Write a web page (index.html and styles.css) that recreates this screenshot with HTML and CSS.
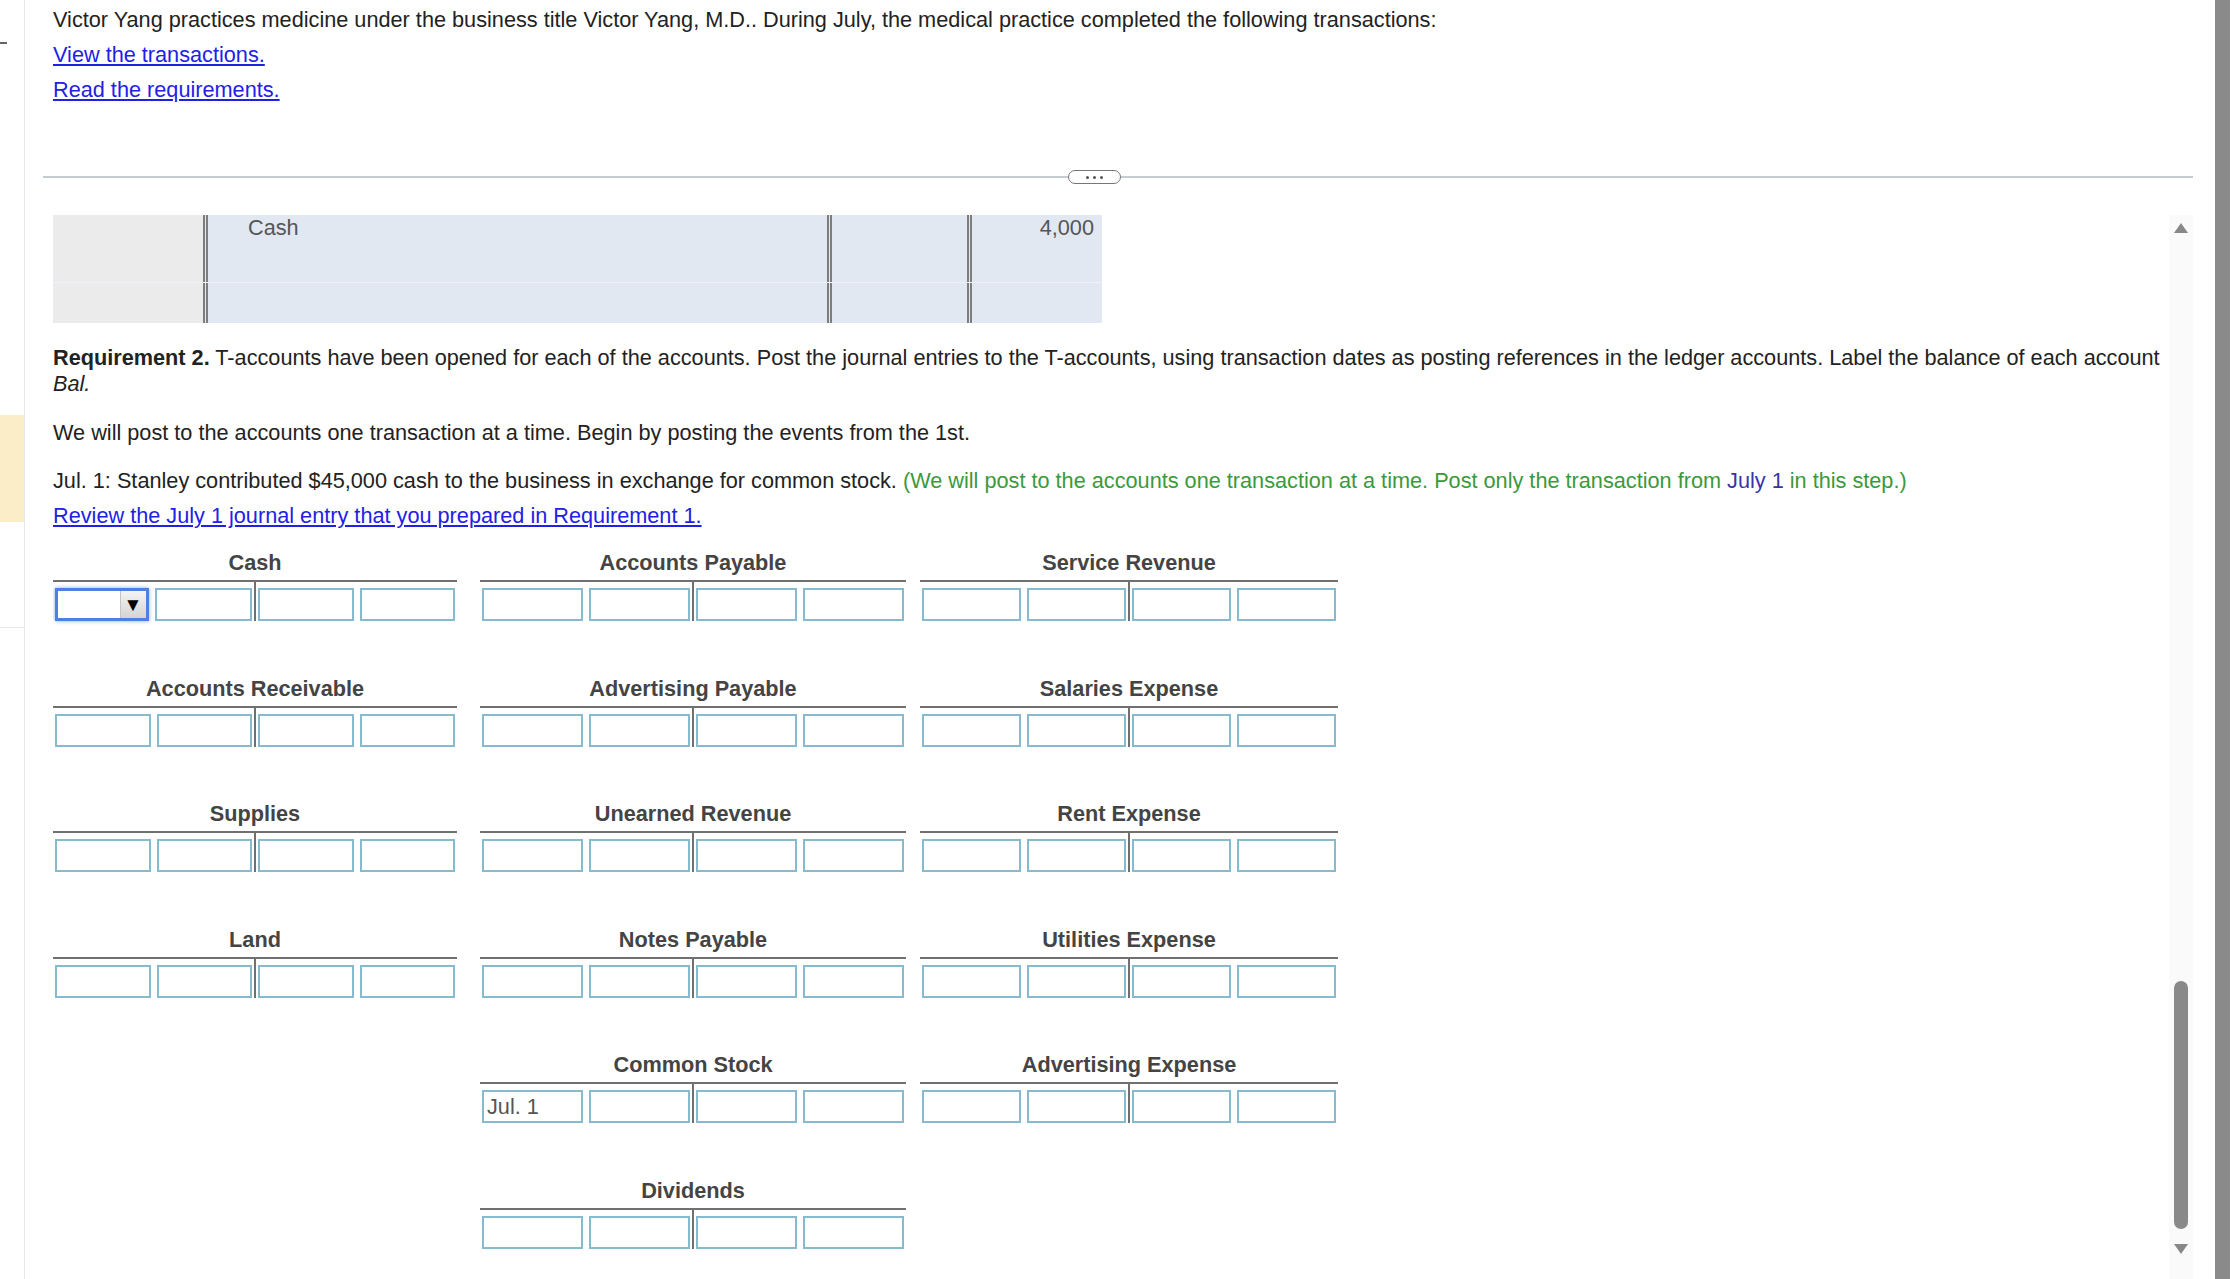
FILE: index.html
```html
<!DOCTYPE html>
<html lang="en">
<head>
    <meta charset="UTF-8">
    <meta name="viewport" content="width=device-width, initial-scale=1">
    <title>Requirement 2 - T-accounts</title>
    <link rel="stylesheet" href="styles.css">
</head>
<body>

<div class="shell">

    <div class="gutter">
        <span class="dash"></span>
        <div class="noteStrip"></div>
        <div class="gutterRule"></div>
    </div>

    <div class="main">

        <div class="intro">
            <p>Victor Yang practices medicine under the business title Victor Yang, M.D.. During July, the medical practice completed the following transactions:</p>
            <p><a href="#">View the transactions.</a></p>
            <p><a href="#">Read the requirements.</a></p>
        </div>

        <div class="divider">
            <span class="dividerLine first"></span>
            <span class="pill"><i></i><i></i><i></i></span>
            <span class="dividerLine"></span>
        </div>

        <div class="pane">
            <div class="paneContent">

                <!-- journal table, scrolled so only the bottom shows -->
                <div class="ledger">
                    <div class="ledgerRow tall">
                        <div class="cellGray"></div>
                        <div class="cellAcct"><span class="cellText">Cash</span></div>
                        <div class="cellRef"></div>
                        <div class="cellAmt"><span class="cellText">4,000</span></div>
                    </div>
                    <div class="ledgerRow short">
                        <div class="cellGray"></div>
                        <div class="cellAcct"></div>
                        <div class="cellRef"></div>
                        <div class="cellAmt"></div>
                    </div>
                </div>

                <p class="req"><b>Requirement 2.</b> T-accounts have been opened for each of the accounts. Post the journal entries to the T-accounts, using transaction dates as posting references in the ledger accounts. Label the balance of each account <i>Bal.</i></p>

                <p class="step">We will post to the accounts one transaction at a time. Begin by posting the events from the 1st.</p>

                <p class="txn">Jul. 1: Stanley contributed $45,000 cash to the business in exchange for common stock. <span class="hint">(We will post to the accounts one transaction at a time. Post only the transaction from <span class="hintDate">July 1</span> in this step.)</span></p>
                <p class="review"><a href="#">Review the July 1 journal entry that you prepared in Requirement 1.</a></p>

                <div class="tGrid">

                    <div class="tAccount colA">
                        <div class="tTitle">Cash</div>
                        <div class="tBody">
                            <div class="half">
                                <div class="pick"><span class="pickBox"></span><span class="pickBtn">&#9660;</span></div>
                                <input class="tInput" type="text">
                            </div>
                            <div class="half">
                                <input class="tInput" type="text">
                                <input class="tInput" type="text">
                            </div>
                        </div>
                    </div>
                    <div class="tAccount colB">
                        <div class="tTitle">Accounts Payable</div>
                        <div class="tBody">
                            <div class="half"><input class="tInput" type="text"><input class="tInput" type="text"></div>
                            <div class="half"><input class="tInput" type="text"><input class="tInput" type="text"></div>
                        </div>
                    </div>
                    <div class="tAccount colC">
                        <div class="tTitle">Service Revenue</div>
                        <div class="tBody">
                            <div class="half"><input class="tInput" type="text"><input class="tInput" type="text"></div>
                            <div class="half"><input class="tInput" type="text"><input class="tInput" type="text"></div>
                        </div>
                    </div>

                    <div class="tAccount colA">
                        <div class="tTitle">Accounts Receivable</div>
                        <div class="tBody">
                            <div class="half"><input class="tInput" type="text"><input class="tInput" type="text"></div>
                            <div class="half"><input class="tInput" type="text"><input class="tInput" type="text"></div>
                        </div>
                    </div>
                    <div class="tAccount colB">
                        <div class="tTitle">Advertising Payable</div>
                        <div class="tBody">
                            <div class="half"><input class="tInput" type="text"><input class="tInput" type="text"></div>
                            <div class="half"><input class="tInput" type="text"><input class="tInput" type="text"></div>
                        </div>
                    </div>
                    <div class="tAccount colC">
                        <div class="tTitle">Salaries Expense</div>
                        <div class="tBody">
                            <div class="half"><input class="tInput" type="text"><input class="tInput" type="text"></div>
                            <div class="half"><input class="tInput" type="text"><input class="tInput" type="text"></div>
                        </div>
                    </div>

                    <div class="tAccount colA">
                        <div class="tTitle">Supplies</div>
                        <div class="tBody">
                            <div class="half"><input class="tInput" type="text"><input class="tInput" type="text"></div>
                            <div class="half"><input class="tInput" type="text"><input class="tInput" type="text"></div>
                        </div>
                    </div>
                    <div class="tAccount colB">
                        <div class="tTitle">Unearned Revenue</div>
                        <div class="tBody">
                            <div class="half"><input class="tInput" type="text"><input class="tInput" type="text"></div>
                            <div class="half"><input class="tInput" type="text"><input class="tInput" type="text"></div>
                        </div>
                    </div>
                    <div class="tAccount colC">
                        <div class="tTitle">Rent Expense</div>
                        <div class="tBody">
                            <div class="half"><input class="tInput" type="text"><input class="tInput" type="text"></div>
                            <div class="half"><input class="tInput" type="text"><input class="tInput" type="text"></div>
                        </div>
                    </div>

                    <div class="tAccount colA">
                        <div class="tTitle">Land</div>
                        <div class="tBody">
                            <div class="half"><input class="tInput" type="text"><input class="tInput" type="text"></div>
                            <div class="half"><input class="tInput" type="text"><input class="tInput" type="text"></div>
                        </div>
                    </div>
                    <div class="tAccount colB">
                        <div class="tTitle">Notes Payable</div>
                        <div class="tBody">
                            <div class="half"><input class="tInput" type="text"><input class="tInput" type="text"></div>
                            <div class="half"><input class="tInput" type="text"><input class="tInput" type="text"></div>
                        </div>
                    </div>
                    <div class="tAccount colC">
                        <div class="tTitle">Utilities Expense</div>
                        <div class="tBody">
                            <div class="half"><input class="tInput" type="text"><input class="tInput" type="text"></div>
                            <div class="half"><input class="tInput" type="text"><input class="tInput" type="text"></div>
                        </div>
                    </div>

                    <div class="tEmpty"></div>
                    <div class="tAccount colB">
                        <div class="tTitle">Common Stock</div>
                        <div class="tBody">
                            <div class="half"><input class="tInput" type="text" value="Jul. 1"><input class="tInput" type="text"></div>
                            <div class="half"><input class="tInput" type="text"><input class="tInput" type="text"></div>
                        </div>
                    </div>
                    <div class="tAccount colC">
                        <div class="tTitle">Advertising Expense</div>
                        <div class="tBody">
                            <div class="half"><input class="tInput" type="text"><input class="tInput" type="text"></div>
                            <div class="half"><input class="tInput" type="text"><input class="tInput" type="text"></div>
                        </div>
                    </div>

                    <div class="tEmpty"></div>
                    <div class="tAccount colB">
                        <div class="tTitle">Dividends</div>
                        <div class="tBody">
                            <div class="half"><input class="tInput" type="text"><input class="tInput" type="text"></div>
                            <div class="half"><input class="tInput" type="text"><input class="tInput" type="text"></div>
                        </div>
                    </div>

                </div>
            </div>

            <div class="vscroll">
                <span class="arrowUp"></span>
                <span class="track"></span>
                <span class="thumb"></span>
                <span class="arrowDown"></span>
            </div>
        </div>

    </div>

    <div class="rightGap"></div>
    <div class="outerBar"></div>

</div>

</body>
</html>
```

FILE: styles.css
```css
body {
    margin: 0;
    font-family: "Liberation Sans", Arial, sans-serif;
    font-size: 21.7px;
    color: #222;
    background: #fff;
    overflow: hidden;
}

a {
    color: #2121e6;
    text-decoration: underline;
}

.shell {
    display: flex;
    height: 1279px;
}

/* left gutter */
.gutter {
    width: 24px;
    flex: none;
    border-right: 1px solid #e6e6ea;
    display: flex;
    flex-direction: column;
}

.dash {
    display: block;
    width: 7px;
    height: 2px;
    margin-top: 42px;
    background: #666;
}

.noteStrip {
    height: 107px;
    margin-top: 371px;
    background: #fbedc7;
}

.gutterRule {
    margin-top: 105px;
    border-top: 1px solid #e6e6ea;
}

/* main column */
.main {
    width: 2168px;
    flex: none;
}

.intro {
    padding: 8px 0 0 28px;
}

.intro p {
    margin: 0 0 11px;
    line-height: 24px;
}

.intro p:last-child {
    margin-bottom: 0;
}

.divider {
    display: flex;
    align-items: center;
    height: 16px;
    margin: 67px 0 0 18px;
}

.dividerLine {
    flex: 1;
    height: 2px;
    background: #c6cad1;
}

.dividerLine.first {
    flex: none;
    width: 1025px;
}

.pill {
    width: 53px;
    height: 14px;
    box-sizing: border-box;
    border: 1px solid #777;
    border-radius: 8px;
    background: #fff;
    display: flex;
    align-items: center;
    justify-content: center;
    gap: 4px;
}

.pill i {
    width: 3px;
    height: 3px;
    border-radius: 50%;
    background: #555;
}

/* scroll pane */
.pane {
    display: flex;
    height: 1064px;
    margin: 30px 0 0 28px;
    overflow: hidden;
}

.paneContent {
    flex: 1;
    padding-right: 5px;
}

.ledger {
    width: 1049px;
}

.ledgerRow {
    display: flex;
}

.ledgerRow.tall {
    height: 67px;
    border-bottom: 1px solid #eef1f7;
}

.ledgerRow.short {
    height: 40px;
}

.cellGray {
    width: 150px;
    background: #ebebeb;
}

.cellAcct,
.cellRef,
.cellAmt {
    box-sizing: border-box;
    border-left: 5px double #7d7d7d;
    background: #e1e8f2;
    color: #555;
}

.cellAcct {
    width: 624px;
    padding-left: 40px;
}

.cellRef {
    width: 140px;
}

.cellAmt {
    width: 135px;
    padding-right: 8px;
    text-align: right;
}

.cellText {
    display: block;
    line-height: 25px;
}

.req {
    margin: 22px 0 0;
    line-height: 26px;
}

.step {
    margin: 23px 0 0;
    line-height: 26px;
}

.txn {
    margin: 22px 0 0;
    line-height: 26px;
}

.hint {
    color: #3a9a3a;
}

.hintDate {
    color: #3636a8;
}

.review {
    margin: 9px 0 0;
    line-height: 26px;
}

/* T-accounts */
.tGrid {
    display: grid;
    grid-template-columns: 427px 440px 418px;
    row-gap: 53.5px;
    margin-top: 22px;
}

.colA { width: 404px; }
.colB { width: 426px; }
.colC { width: 418px; }

.tTitle {
    text-align: center;
    font-weight: bold;
    color: #444;
    line-height: 24px;
    padding-bottom: 5px;
}

.tBody {
    display: flex;
    border-top: 2px solid #707070;
    padding-bottom: 2px;
}

.half {
    flex: 1;
    min-width: 0;
    display: flex;
    gap: 6px;
    padding: 6px 2px 0;
}

.half + .half {
    border-left: 2px solid #707070;
}

.tInput {
    flex: 1;
    width: 0;
    min-width: 0;
    height: 33px;
    box-sizing: border-box;
    border: 2px solid #87b9cf;
    margin: 0;
    padding: 0 3px;
    font-family: inherit;
    font-size: 21.7px;
    color: #555;
    background: #fff;
}

.pick {
    flex: 1;
    width: 0;
    height: 33px;
    box-sizing: border-box;
    border: 3px solid #4f7fe0;
    box-shadow: 0 0 4px #86a8f0;
    display: flex;
    background: #fff;
}

.pickBox {
    flex: 1;
}

.pickBtn {
    width: 25px;
    background: linear-gradient(#f4f4f4, #d4d4d4);
    border-left: 1px solid #c4c4c4;
    display: flex;
    align-items: center;
    justify-content: center;
    font-size: 19px;
    color: #000;
}

/* inner scrollbar */
.vscroll {
    width: 24px;
    flex: none;
    background: #fafafa;
    display: flex;
    flex-direction: column;
    align-items: center;
}

.arrowUp {
    margin-top: 8px;
    border-left: 7px solid transparent;
    border-right: 7px solid transparent;
    border-bottom: 10px solid #888;
}

.track {
    flex: 1;
}

.thumb {
    width: 14px;
    height: 248px;
    border-radius: 7px;
    background: #898989;
}

.arrowDown {
    margin: 15px 0 25px;
    border-left: 7px solid transparent;
    border-right: 7px solid transparent;
    border-top: 10px solid #888;
}

.rightGap {
    width: 22px;
    flex: none;
}

.outerBar {
    width: 15px;
    flex: none;
    background: #8a8a8a;
}
```
